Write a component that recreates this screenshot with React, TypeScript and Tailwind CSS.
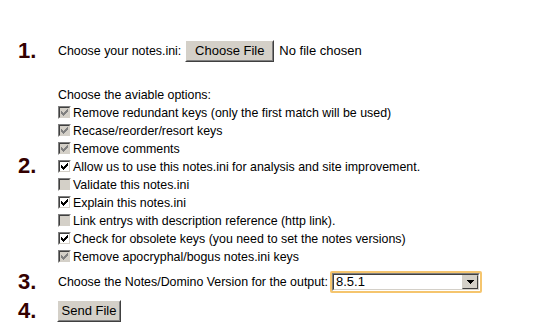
import type { ReactNode } from 'react';

type Opt = { label: string; checked: boolean; disabled: boolean };

const options: Opt[] = [
  { label: 'Remove redundant keys (only the first match will be used)', checked: true, disabled: true },
  { label: 'Recase/reorder/resort keys', checked: true, disabled: true },
  { label: 'Remove comments', checked: true, disabled: true },
  { label: 'Allow us to use this notes.ini for analysis and site improvement.', checked: true, disabled: false },
  { label: 'Validate this notes.ini', checked: false, disabled: true },
  { label: 'Explain this notes.ini', checked: true, disabled: false },
  { label: 'Link entrys with description reference (http link).', checked: false, disabled: true },
  { label: 'Check for obsolete keys (you need to set the notes versions)', checked: true, disabled: false },
  { label: 'Remove apocryphal/bogus notes.ini keys', checked: true, disabled: true },
];

function Step({ n, className, children }: { n: string; className: string; children: ReactNode }) {
  return (
    <div className={`flex items-center ${className}`}>
      <div className="w-[40px] text-[22px] font-bold leading-none text-[#330000]">{n}</div>
      <div className="flex-1">{children}</div>
    </div>
  );
}

// classic win9x raised button
function Button({ children, className }: { children: ReactNode; className: string }) {
  return (
    <span className={`inline-flex items-center justify-center border border-t-white border-l-white border-r-[#404040] border-b-[#404040] bg-[#d4d0c8] ${className}`}>
      <span className="flex h-full w-full items-center justify-center border border-transparent border-r-[#808080] border-b-[#808080] text-[13px] text-black">
        {children}
      </span>
    </span>
  );
}

function Checkbox({ checked, disabled }: { checked: boolean; disabled: boolean }) {
  return (
    <span className="inline-block h-[13px] w-[13px] shrink-0 border border-t-[#808080] border-l-[#808080] border-r-white border-b-white">
      <span
        className={`flex h-full w-full items-center justify-center border border-t-[#404040] border-l-[#404040] border-r-[#d4d0c8] border-b-[#d4d0c8] ${
          disabled ? 'bg-[#d4d0c8]' : 'bg-white'
        }`}
      >
        {checked && (
          <svg width="7" height="7" viewBox="0 0 7 7" shapeRendering="crispEdges" fill={disabled ? '#808080' : '#000'}>
            <rect x="6" y="0" width="1" height="3" />
            <rect x="5" y="1" width="1" height="3" />
            <rect x="4" y="2" width="1" height="3" />
            <rect x="3" y="3" width="1" height="3" />
            <rect x="2" y="4" width="1" height="3" />
            <rect x="1" y="3" width="1" height="3" />
            <rect x="0" y="2" width="1" height="3" />
          </svg>
        )}
      </span>
    </span>
  );
}

export default function App() {
  return (
    <div className="min-h-[334px] w-[539px] bg-white pl-[18px] text-[12.4px] text-black [font-family:'Liberation_Sans',Arial,sans-serif]">
      <div className="h-[39px]" />

      <Step n="1." className="h-[24px]">
        <div className="flex items-center">
          <span>Choose your notes.ini:</span>
          <Button className="ml-[4px] h-[22px] w-[89px]">Choose File</Button>
          <span className="ml-[5px] text-[13px]">No file chosen</span>
        </div>
      </Step>

      <Step n="2." className="mt-[4px] h-[198px]">
        <div className="pt-[19px] leading-[18px]">
          <div>Choose the aviable options:</div>
          {options.map((o) => (
            <div key={o.label} className="flex h-[18px] items-center">
              <Checkbox checked={o.checked} disabled={o.disabled} />
              <span className="ml-[2px]">{o.label}</span>
            </div>
          ))}
        </div>
      </Step>

      <Step n="3." className="mt-[6px] h-[22px]">
        <div className="flex items-center">
          <span>Choose the Notes/Domino Version for the output:</span>
          <span className="ml-[2px] inline-flex h-[22px] w-[152px] rounded-[2px] bg-[#f5c56e] p-[2px]">
            <span className="flex h-full w-full items-center border border-t-[#808080] border-l-[#808080] border-r-white border-b-white bg-white">
              <span className="flex h-full w-full items-center border border-t-[#404040] border-l-[#404040] border-r-[#d4d0c8] border-b-[#d4d0c8]">
                <span className="flex-1 pl-[2px] text-[13px]">8.5.1</span>
                <span className="flex h-full w-[16px] items-center justify-center border border-t-[#d4d0c8] border-l-[#d4d0c8] border-r-[#404040] border-b-[#404040] bg-[#d4d0c8]">
                  <svg width="7" height="4" viewBox="0 0 7 4" shapeRendering="crispEdges">
                    <path d="M0 0h7v1h-1v1h-1v1h-1v1h-1v-1h-1v-1h-1v-1h-1z" fill="#000" />
                  </svg>
                </span>
              </span>
            </span>
          </span>
        </div>
      </Step>

      <Step n="4." className="mt-[7px] h-[22px]">
        <Button className="-ml-[1px] h-[22px] w-[64px]">Send File</Button>
      </Step>
    </div>
  );
}
